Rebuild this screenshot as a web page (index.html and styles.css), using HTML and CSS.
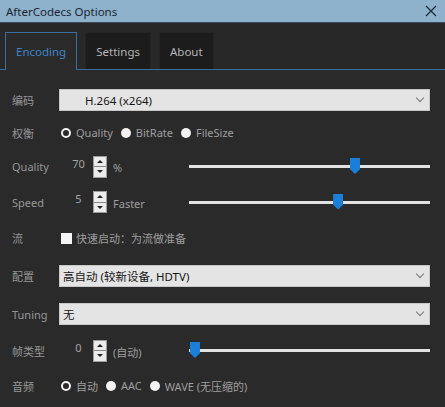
FILE: index.html
```html
<!DOCTYPE html>
<html>

<head>
  <title>AfterCodecs Options</title>
  <link rel="stylesheet" href="styles.css">
</head>

<body>
  <div class="titlebar">
    <span class="title">AfterCodecs Options</span>
    <svg class="close" width="12" height="12" viewBox="0 0 12 12">
      <path d="M1 1 L11 11 M11 1 L1 11" stroke="#1e2a36" stroke-width="1.2" fill="none" />
    </svg>
  </div>

  <div class="tabs">
    <div class="tab active">Encoding</div>
    <div class="tab">Settings</div>
    <div class="tab">About</div>
  </div>

  <div class="panel">
    <div class="row h32">
      <div class="label">编码</div>
      <div class="select first"><span>H.264 (x264)</span><span class="chevron"></span></div>
    </div>

    <div class="row h33">
      <div class="label">权衡</div>
      <div class="radios">
        <span class="radio checked"></span><span>Quality</span>
        <span class="radio"></span><span>BitRate</span>
        <span class="radio"></span><span>FileSize</span>
      </div>
    </div>

    <div class="row h35">
      <div class="label">Quality</div>
      <div class="value">70</div>
      <div class="spin"><span class="up"></span><span class="down"></span></div>
      <div class="unit">%</div>
      <div class="slider"><span class="thumb" style="left: 66.8%"></span></div>
    </div>

    <div class="row h36">
      <div class="label">Speed</div>
      <div class="value">5</div>
      <div class="spin"><span class="up"></span><span class="down"></span></div>
      <div class="unit">Faster</div>
      <div class="slider"><span class="thumb" style="left: 59.8%"></span></div>
    </div>

    <div class="row h36">
      <div class="label">流</div>
      <span class="checkbox"></span>
      <span class="text">快速启动：为流做准备</span>
    </div>

    <div class="row h39">
      <div class="label">配置</div>
      <div class="select"><span>高自动 (较新设备, HDTV)</span><span class="chevron"></span></div>
    </div>

    <div class="row h38">
      <div class="label">Tuning</div>
      <div class="select"><span>无</span><span class="chevron"></span></div>
    </div>

    <div class="row h35">
      <div class="label">帧类型</div>
      <div class="value">0</div>
      <div class="spin"><span class="up"></span><span class="down"></span></div>
      <div class="unit">(自动)</div>
      <div class="slider"><span class="thumb" style="left: 0.4%"></span></div>
    </div>

    <div class="row h35">
      <div class="label">音频</div>
      <div class="radios">
        <span class="radio checked"></span><span>自动</span>
        <span class="radio"></span><span>AAC</span>
        <span class="radio"></span><span>WAVE (无压缩的)</span>
      </div>
    </div>
  </div>
</body>

</html>
```

FILE: styles.css
```css
body {
  margin: 0;
  width: 445px;
  height: 407px;
  overflow: hidden;
  background: #2a2a2a;
  font-family: "Noto Sans", "Noto Sans CJK SC", sans-serif;
  font-size: 11px;
  color: #9e9e9e;
}

/* Window title */
.titlebar {
  height: 22px;
  background: #8eb1cc;
  border-bottom: 1px solid #3a4a58;
  display: flex;
  align-items: center;
  justify-content: space-between;
  padding: 0 8px 0 6px;
}

.title {
  color: #1c2630;
  font-size: 11.5px;
}

/* Tabs */
.tabs {
  display: flex;
  gap: 8px;
  padding: 9px 0 0 5px;
  background: #282828;
  border-bottom: 1px solid #3b6e9c;
}

.tab {
  height: 36px;
  display: flex;
  align-items: center;
  padding: 0 10px;
  background: #1c1c1c;
  color: #b4b4b4;
  font-size: 11.5px;
  border: 1px solid #242424;
  border-bottom: none;
}

.tab.active {
  padding: 0 10px;
  background: #2a2a2a;
  color: #3f84c8;
  border: 1px solid #3b6e9c;
  border-bottom: none;
  margin-bottom: -1px;
  height: 37px;
}

/* Form rows */
.panel {
  padding: 14px 15px 0 12px;
}

.row {
  display: flex;
  align-items: center;
}

.h32 { height: 32px; }
.h33 { height: 33px; }
.h35 { height: 35px; }
.h36 { height: 36px; }
.h38 { height: 38px; }
.h39 { height: 39px; }

.label {
  width: 47px;
  flex: none;
  color: #969696;
}

.select {
  flex: 1;
  height: 22px;
  background: #e4e4e4;
  border: 1px solid #c8c8c8;
  box-sizing: border-box;
  display: flex;
  align-items: center;
  justify-content: space-between;
  padding: 0 6px 0 3px;
  color: #161616;
  font-size: 11.5px;
}

.select.first {
  padding-left: 25px;
}

.chevron {
  width: 5px;
  height: 5px;
  border-right: 1.3px solid #777;
  border-bottom: 1.3px solid #777;
  transform: rotate(45deg);
  margin-top: -4px;
}

.radios {
  display: flex;
  align-items: center;
  margin-left: 2px;
}

.radios span + .radio {
  margin-left: 8px;
}

.radio {
  width: 10px;
  height: 10px;
  border-radius: 50%;
  background: #f2f2f2;
  margin-right: 5px;
  box-sizing: border-box;
}

.radio.checked {
  background: #2a2a2a;
  border: 2.5px solid #f2f2f2;
}

.checkbox {
  width: 11px;
  height: 11px;
  background: #f4f4f4;
  margin-left: 2px;
  margin-right: 4px;
}

.value {
  width: 29px;
  margin-left: 5px;
  text-align: center;
  color: #a4a4a4;
  align-self: flex-start;
  margin-top: 7px;
}

.spin {
  width: 14px;
  height: 22px;
  display: flex;
  flex-direction: column;
  gap: 1px;
  background: #888;
  border: 1px solid #9c9c9c;
  box-sizing: border-box;
}

.spin span {
  flex: 1;
  background: #ececec;
  display: flex;
  align-items: center;
  justify-content: center;
}

.spin .up::after {
  content: "";
  border: 3px solid transparent;
  border-bottom: 3px solid #222;
  border-top: none;
}

.spin .down::after {
  content: "";
  border: 3px solid transparent;
  border-top: 3px solid #222;
  border-bottom: none;
}

.unit {
  margin-left: 6px;
  margin-top: 2px;
}

.slider {
  margin-left: auto;
  width: 241px;
  height: 3px;
  background: #e2e2e2;
  position: relative;
}

.thumb {
  position: absolute;
  top: -7px;
  width: 10px;
  height: 16px;
  background: #1b7fd9;
  clip-path: polygon(0 0, 100% 0, 100% 70%, 50% 100%, 0 70%);
}

.text {
  color: #9e9e9e;
}
```
